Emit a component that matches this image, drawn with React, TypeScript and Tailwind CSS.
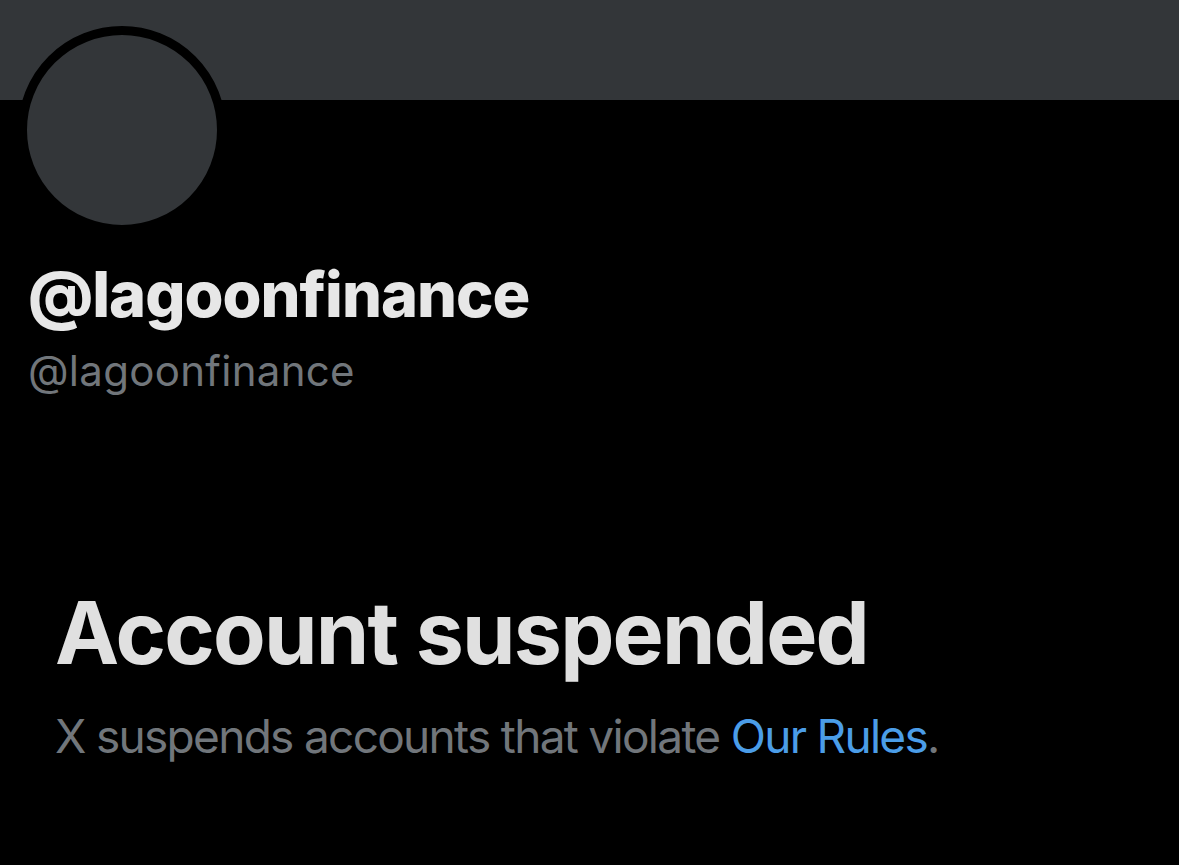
const App: React.FC = () => {
  return (
    <div className="min-h-[865px] w-full bg-black font-['Inter','Noto_Sans',sans-serif]">
      <div className="h-[100px] bg-[#333639]" />
      <div className="px-[18px]">
        <div className="-mt-[74px] h-[208px] w-[208px] rounded-full border-[9px] border-black bg-[#333639]" />
      </div>
      <div className="px-[28px] pt-[28px]">
        <h2 className="text-[63px] font-extrabold leading-[64px] tracking-[-1px] text-[#e7e7e7]">@lagoonfinance</h2>
        <div className="mt-[21px] text-[42px] leading-[48px] tracking-[0.3px] text-[#71767b]">@lagoonfinance</div>
      </div>
      <div className="px-[55px] pt-[190px]">
        <h1 className="text-[86px] font-bold leading-[96px] tracking-[-1.8px] text-[#e0e0e0]">Account suspended</h1>
        <p className="mt-[27px] text-[46px] leading-[56px] tracking-[-1.7px] text-[#71767b]">
          X suspends accounts that violate <span className="text-[#4b9de8]">Our Rules</span>.
        </p>
      </div>
    </div>
  );
};

export default App;
